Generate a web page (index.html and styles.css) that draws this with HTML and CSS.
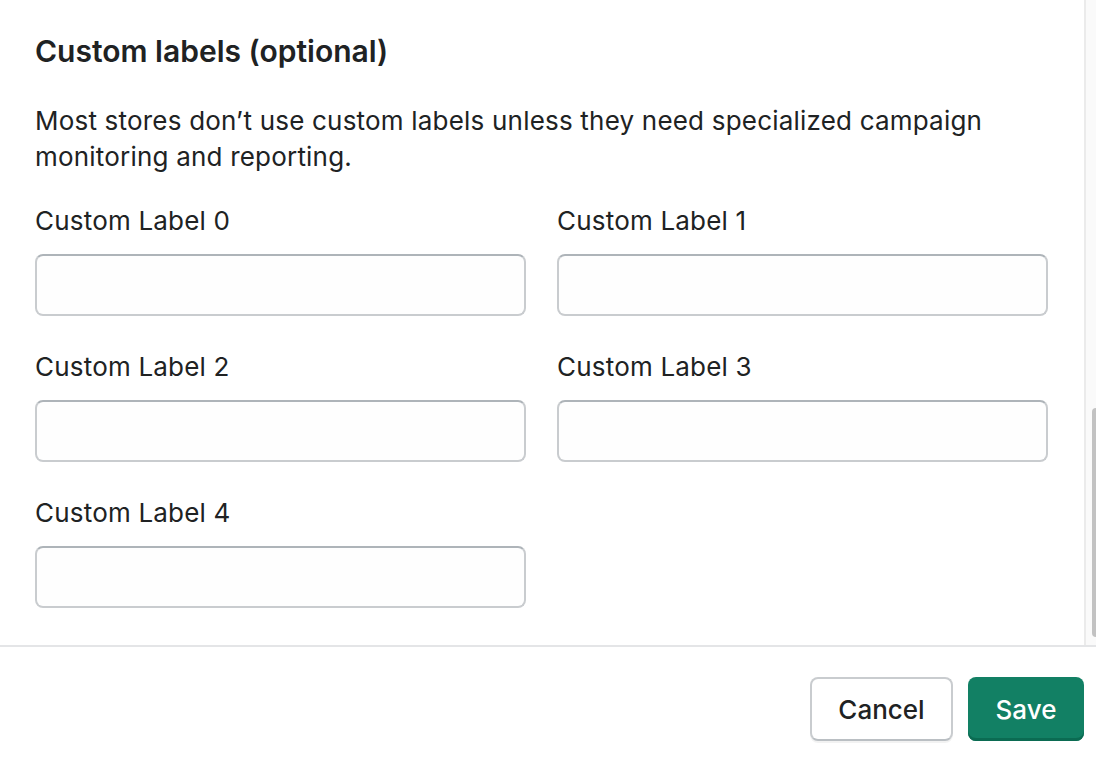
FILE: index.html
```html
<!DOCTYPE html>
<html lang="en">
<head>
<meta charset="utf-8">
<title>Custom labels</title>
<link rel="stylesheet" href="styles.css">
</head>
<body>
<div class="modal">
  <div class="modal-body">
    <section class="content">
      <h2 class="heading">Custom labels (optional)</h2>
      <p class="description">Most stores don’t use custom labels unless they need specialized campaign monitoring and reporting.</p>
      <div class="field-grid">
        <label class="field">
          <span class="field-label">Custom Label 0</span>
          <input class="field-input" type="text">
        </label>
        <label class="field">
          <span class="field-label">Custom Label 1</span>
          <input class="field-input" type="text">
        </label>
        <label class="field">
          <span class="field-label">Custom Label 2</span>
          <input class="field-input" type="text">
        </label>
        <label class="field">
          <span class="field-label">Custom Label 3</span>
          <input class="field-input" type="text">
        </label>
        <label class="field">
          <span class="field-label">Custom Label 4</span>
          <input class="field-input" type="text">
        </label>
      </div>
    </section>
    <div class="scrollbar">
      <div class="scrollbar-thumb"></div>
    </div>
  </div>
  <footer class="modal-footer">
    <button class="btn btn-secondary" type="button">Cancel</button>
    <button class="btn btn-primary" type="button">Save</button>
  </footer>
</div>
</body>
</html>
```

FILE: styles.css
```css
* {
  box-sizing: border-box;
}

html, body {
  margin: 0;
  padding: 0;
  background: #ffffff;
}

body {
  font-family: Inter, "Noto Sans", "Liberation Sans", sans-serif;
  color: #202223;
  width: 1096px;
  height: 764px;
  overflow: hidden;
}

.modal {
  display: flex;
  flex-direction: column;
  height: 764px;
}

.modal-body {
  display: flex;
  height: 647px;
  border-bottom: 2px solid #e4e5e7;
}

.content {
  width: 1084px;
  padding: 33px 36px 0 35px;
}

.heading {
  margin: 0;
  font-size: 30px;
  line-height: 36px;
  font-weight: 600;
}

.description {
  margin: 34px 0 0;
  font-size: 26px;
  line-height: 36px;
  font-weight: 400;
  letter-spacing: 0.2px;
}

.field-grid {
  display: grid;
  grid-template-columns: 491px 491px;
  column-gap: 31px;
  row-gap: 33px;
  margin-top: 28px;
}

.field {
  display: flex;
  flex-direction: column;
  gap: 15px;
}

.field-label {
  font-size: 26px;
  line-height: 36px;
  letter-spacing: 0.2px;
}

.field-input {
  display: block;
  width: 100%;
  height: 62px;
  margin: 0;
  border: 2px solid #c9cccf;
  border-top-color: #aeb4b9;
  border-radius: 8px;
  background: #fefefe;
  font: inherit;
}

.scrollbar {
  width: 12px;
  border-left: 2px solid #ebebeb;
  background: #fafafa;
  padding: 408px 0 0 6px;
}

.scrollbar-thumb {
  height: 229px;
  background: #c2c2c2;
  border-radius: 6px 0 0 6px;
}

.modal-footer {
  display: flex;
  justify-content: flex-end;
  gap: 15px;
  padding: 30px 12px 0 0;
}

.btn {
  height: 64px;
  border-radius: 8px;
  font-family: inherit;
  font-size: 26px;
  font-weight: 500;
  cursor: pointer;
}

.btn-secondary {
  width: 143px;
  background: #ffffff;
  color: #202223;
  border: 2px solid #c9cccf;
  border-bottom-color: #babfc3;
  box-shadow: 0 2px 0 rgba(0, 0, 0, 0.05);
}

.btn-primary {
  width: 116px;
  background: #128064;
  color: #ffffff;
  border: none;
  box-shadow: inset 0 -3px 0 #0b6b52;
}
```
